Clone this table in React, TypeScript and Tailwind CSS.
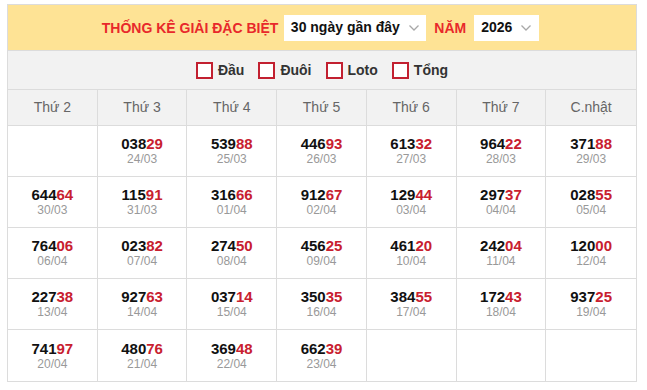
import React from 'react';

type Cell = { num: string; date: string } | null;

const rows: Cell[][] = [
  [null, { num: '03829', date: '24/03' }, { num: '53988', date: '25/03' }, { num: '44693', date: '26/03' }, { num: '61332', date: '27/03' }, { num: '96422', date: '28/03' }, { num: '37188', date: '29/03' }],
  [{ num: '64464', date: '30/03' }, { num: '11591', date: '31/03' }, { num: '31666', date: '01/04' }, { num: '91267', date: '02/04' }, { num: '12944', date: '03/04' }, { num: '29737', date: '04/04' }, { num: '02855', date: '05/04' }],
  [{ num: '76406', date: '06/04' }, { num: '02382', date: '07/04' }, { num: '27450', date: '08/04' }, { num: '45625', date: '09/04' }, { num: '46120', date: '10/04' }, { num: '24204', date: '11/04' }, { num: '12000', date: '12/04' }],
  [{ num: '22738', date: '13/04' }, { num: '92763', date: '14/04' }, { num: '03714', date: '15/04' }, { num: '35035', date: '16/04' }, { num: '38455', date: '17/04' }, { num: '17243', date: '18/04' }, { num: '93725', date: '19/04' }],
  [{ num: '74197', date: '20/04' }, { num: '48076', date: '21/04' }, { num: '36948', date: '22/04' }, { num: '66239', date: '23/04' }, null, null, null],
];

const days = ['Thứ 2', 'Thứ 3', 'Thứ 4', 'Thứ 5', 'Thứ 6', 'Thứ 7', 'C.nhật'];
const filters = ['Đầu', 'Đuôi', 'Loto', 'Tổng'];

const Chevron = () => (
  <svg width="12" height="8" viewBox="0 0 12 8" className="ml-[8px]">
    <path d="M1.5 1.5 L6 6 L10.5 1.5" fill="none" stroke="#a8a8a8" strokeWidth="1.3" />
  </svg>
);

const App: React.FC = () => {
  return (
    <div className="min-h-[390px] bg-white pt-[4px] pl-[7px]" style={{ fontFamily: '"Liberation Sans", Arial, sans-serif' }}>
      <div className="w-[630px] border border-[#dcdcdc]">
        {/* tiêu đề */}
        <div className="h-[46px] bg-[#fee395] flex items-center justify-center pr-[3px] border-b border-[#dcdcdc]">
          <span className="text-[14px] font-bold text-[#e8282b] mr-[6px] mt-[1px]">THỐNG KÊ GIẢI ĐẶC BIỆT</span>
          <div className="h-[26px] w-[142px] bg-white flex items-center justify-center">
            <span className="text-[14px] font-bold text-[#111]">30 ngày gần đây</span>
            <Chevron />
          </div>
          <span className="text-[14px] font-bold text-[#e8282b] mx-[8px] mt-[1px]">NĂM</span>
          <div className="h-[26px] w-[65px] bg-white flex items-center justify-center">
            <span className="text-[14px] font-bold text-[#111]">2026</span>
            <Chevron />
          </div>
        </div>

        {/* bộ lọc */}
        <div className="h-[39px] bg-[#f2f2f2] flex items-center justify-center gap-[14px] border-b border-[#dcdcdc]">
          {filters.map((f) => (
            <label key={f} className="flex items-center gap-[5px]">
              <span className="w-[17px] h-[17px] border-2 border-[#c22030] bg-white" />
              <span className="text-[14px] font-bold text-[#333]">{f}</span>
            </label>
          ))}
        </div>

        {/* bảng */}
        <div className="grid grid-cols-7">
          {days.map((d, i) => (
            <div
              key={d}
              className={`h-[36px] bg-[#f2f2f2] flex items-center justify-center text-[14px] text-[#666] border-b border-[#dcdcdc] ${i < 6 ? 'border-r' : ''}`}
            >
              {d}
            </div>
          ))}
          {rows.map((row, ri) =>
            row.map((c, ci) => (
              <div
                key={`${ri}-${ci}`}
                className={`h-[51px] flex flex-col items-center justify-center border-[#dcdcdc] ${ci < 6 ? 'border-r' : ''} ${ri < rows.length - 1 ? 'border-b' : ''}`}
              >
                {c && (
                  <>
                    <div className="text-[15px] font-bold leading-[17px] text-[#111]">
                      {c.num.slice(0, 3)}
                      <span className="text-[#c8202f]">{c.num.slice(3)}</span>
                    </div>
                    <div className="text-[12px] leading-[15px] text-[#999]">{c.date}</div>
                  </>
                )}
              </div>
            ))
          )}
        </div>
      </div>
    </div>
  );
};

export default App;
